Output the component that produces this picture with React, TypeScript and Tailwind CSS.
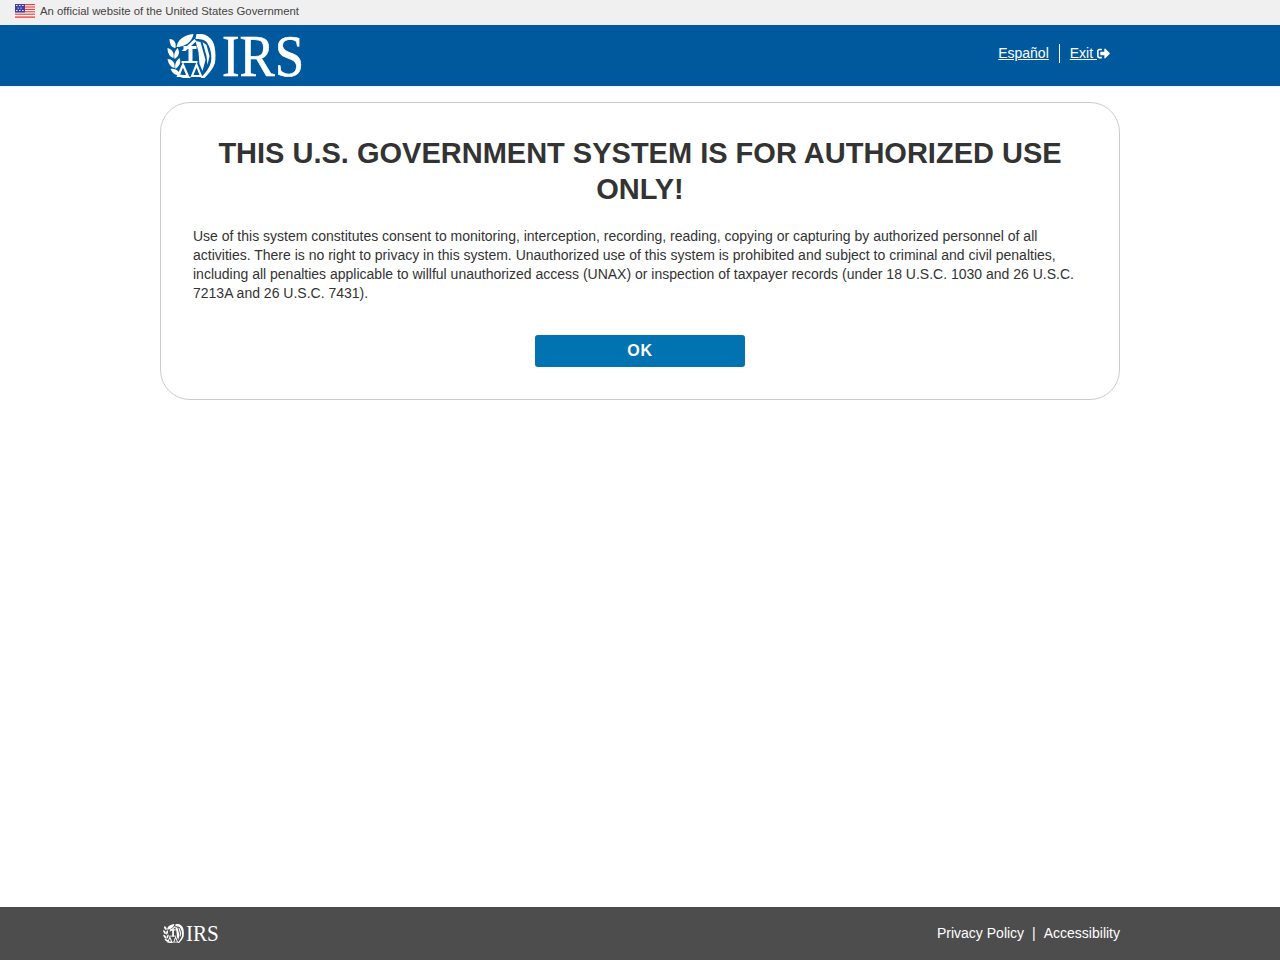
import React from 'react';
import { FaSignOutAlt } from 'react-icons/fa';

const FlagIcon: React.FC = () => (
  <svg width="20" height="14" viewBox="0 0 20 14" className="shrink-0">
    <rect width="20" height="14" fill="#fff" />
    <rect y="0" width="20" height="1.2" fill="#e8433f" />
    <rect y="2.4" width="20" height="1.2" fill="#e8433f" />
    <rect y="4.8" width="20" height="1.2" fill="#e8433f" />
    <rect y="7.2" width="20" height="1.2" fill="#e8433f" />
    <rect y="9.6" width="20" height="1.2" fill="#e8433f" />
    <rect y="12.4" width="20" height="1.4" fill="#e8433f" />
    <rect width="10" height="8.4" fill="#3c3fa8" />
    <g fill="#e8e8f4">
      <rect x="1" y="1" width="1.6" height="1" />
      <rect x="4" y="1" width="1.6" height="1" />
      <rect x="7" y="1" width="1.6" height="1" />
      <rect x="2.6" y="3.6" width="1.2" height="1" />
      <rect x="5.4" y="3.6" width="1.2" height="1" />
      <rect x="1" y="6" width="1.6" height="1" />
      <rect x="4" y="6" width="1.6" height="1" />
      <rect x="7" y="6" width="1.6" height="1" />
    </g>
  </svg>
);

// treasury seal, hand drawn: wreath on the left, scales in the middle, eagle on the right
const IrsSeal: React.FC<{ className?: string }> = ({ className }) => (
  <svg viewBox="0 0 48 44" className={className} fill="#fff">
    <path d="M9 13C10 6 16 1 26 0C25 7 18 13 9 13Z" />
    <path d="M2 5C6 5 9 8 8 14C4 14 2 10 2 5Z" />
    <path d="M0 14C4 15 7 18 6 24C2 23 0 19 0 14Z" />
    <path d="M10 14C13 18 11 23 7 25C6 21 7 17 10 14Z" />
    <path d="M0 25C4 25 8 28 7 34C3 33 1 30 0 25Z" />
    <path d="M12 24C14 28 12 32 8 35C7 31 8 27 12 24Z" />
    <path d="M3 35C7 34 11 36 13 41C8 42 5 39 3 35Z" />
    <path d="M10 41C15 40 20 41 24 44C18 45 13 44 10 41Z" />
    <path d="M16 12H29V15H25V29H21V15H16Z" />
    <path d="M14 17L27 5L29 7L18 17Z" />
    <path fillRule="evenodd" d="M15.5 28L22 43H9ZM15.5 33.5L12.5 41H18.5Z" />
    <path fillRule="evenodd" d="M29 28L35 43H23ZM29 33.5L26 41H32Z" />
    <rect x="14" y="27" width="16" height="2" />
    <path d="M29 0C36 -1 42 2 45 7C48 12 48.5 21 47.5 29C46 34 42 39 37 44L33 44C38 39 42 34 43.5 28C44.5 20 43 13 39 8C36 5 32 5 28 5Z" />
    <path d="M28 7L33 8L38 26L35 37L32 30L31 18Z" />
    <path d="M35 8L39 11L42 22L40 31L39 22Z" />
  </svg>
);

const App: React.FC = () => {
  return (
    <div className="min-h-screen flex flex-col bg-white font-['Liberation_Sans',Arial,sans-serif] text-[#333]">
      {/* Official banner */}
      <div className="h-[25px] bg-[#f0f0f0] flex items-center px-[15px] gap-[5px] pb-[3px] text-[11.35px] leading-[20px] text-[#444]">
        <FlagIcon />
        <span>An official website of the United States Government</span>
      </div>

      {/* Header */}
      <header className="h-[61px] bg-[#00599c]">
        <div className="w-[960px] mx-auto h-full flex items-center justify-between pl-[7px] pr-[10px]">
          <a className="flex items-center gap-[6px] text-white" href="#">
            <IrsSeal className="w-[49px] h-[44px]" />
            <span className="font-['Liberation_Serif',serif] text-[60px] leading-[44px] w-[80px] origin-left scale-x-[0.88] [-webkit-text-stroke:0.7px_white]">IRS</span>
          </a>
          <nav className="flex items-center text-sm text-white pb-[4px]">
            <a href="#" className="underline pr-[10px] leading-[19px] border-r border-white">Español</a>
            <a href="#" className="underline pl-[10px] leading-[19px] flex items-center">
              Exit&nbsp;<FaSignOutAlt className="text-[13px]" />
            </a>
          </nav>
        </div>
      </header>

      {/* Warning */}
      <main className="flex-1">
        <div className="w-[960px] mx-auto mt-4 border border-[#ccc] rounded-[30px] p-8">
          <h1 className="text-[29px] leading-[36px] font-bold text-center">
            THIS U.S. GOVERNMENT SYSTEM IS FOR AUTHORIZED USE ONLY!
          </h1>
          <p className="mt-5 text-sm leading-[19px]">
            Use of this system constitutes consent to monitoring, interception, recording, reading, copying or capturing by authorized personnel of all activities. There is no right to privacy in this system. Unauthorized use of this system is prohibited and subject to criminal and civil penalties, including all penalties applicable to willful unauthorized access (UNAX) or inspection of taxpayer records (under 18 U.S.C. 1030 and 26 U.S.C. 7213A and 26 U.S.C. 7431).
          </p>
          <div className="mt-8 flex justify-center">
            <button className="w-[210px] h-8 bg-[#0073b0] text-white font-bold text-base tracking-[0.8px] rounded-[3px]">OK</button>
          </div>
        </div>
      </main>

      {/* Footer */}
      <footer className="h-[53px] bg-[#4d4d4d]">
        <div className="w-[960px] mx-auto h-full flex items-center justify-between pl-[3px] text-sm text-white">
          <a className="flex items-center gap-[2px]" href="#">
            <IrsSeal className="w-[21px] h-[19px]" />
            <span className="font-['Liberation_Serif',serif] text-[24px] leading-[19px] w-[32px] origin-left scale-x-[0.88]">IRS</span>
          </a>
          <div className="flex items-center gap-2 pb-[1px]">
            <a href="#">Privacy Policy</a>
            <span>|</span>
            <a href="#">Accessibility</a>
          </div>
        </div>
      </footer>
    </div>
  );
};

export default App;
